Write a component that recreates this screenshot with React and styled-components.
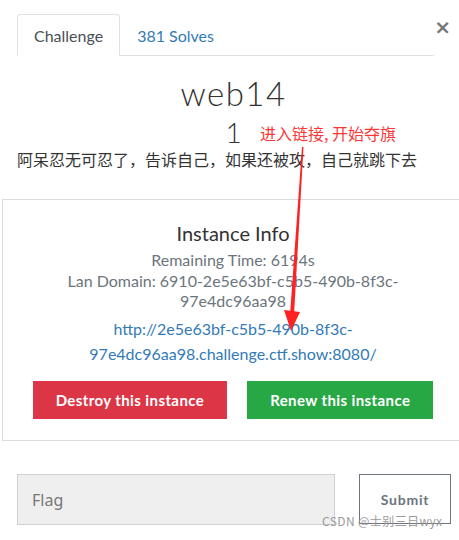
import React from 'react';
import styled, { createGlobalStyle } from 'styled-components';

const GlobalStyle = createGlobalStyle`
    html, body {
        margin: 0;
        padding: 0;
        background: #fff;
        overflow: hidden;
    }
    body {
        font-family: Lato, "Noto Sans", "Noto Sans CJK SC", sans-serif;
        color: #212529;
    }
`;

const Page = styled.div`
    position: relative;
    width: 459px;
    height: 540px;
    overflow: hidden;
`;

const Header = styled.div`
    display: flex;
    align-items: flex-start;
    padding: 14px 0 0 17px;
`;

const TabList = styled.div`
    display: flex;
    width: 419px;
    border-bottom: 1px solid #dee2e6;
`;

const Tab = styled.div`
    height: 42px;
    box-sizing: border-box;
    padding: 0 16px 0 16px;
    display: flex;
    align-items: center;
    font-size: 16px;
    margin-bottom: -1px;
    color: ${(p) => (p.active ? '#495057' : '#337ab7')};
    background: ${(p) => (p.active ? '#fff' : 'transparent')};
    border: 1px solid ${(p) => (p.active ? '#dee2e6' : 'transparent')};
    border-bottom-color: ${(p) => (p.active ? '#fff' : 'transparent')};
    border-radius: 4px 4px 0 0;
`;

const Close = styled.div`
    flex: 1;
    margin-top: 3px;
    padding-right: 8px;
    display: flex;
    justify-content: flex-end;
    color: #777;
    font-family: "DejaVu Sans", sans-serif;
    font-size: 20px;
    font-weight: 700;
    line-height: 20px;
`;

const Body = styled.div`
    display: flex;
    flex-direction: column;
    align-items: center;
    padding: 0 0 0 17px;
    width: 433px;
`;

const Title = styled.h1`
    margin: 17px 0 0;
    font-family: Lato, sans-serif;
    font-weight: 300;
    font-size: 33px;
    letter-spacing: 1.5px;
    line-height: 40px;
    color: #333;
`;

const Points = styled.div`
    font-size: 28px;
    font-weight: 300;
    line-height: 32px;
    margin-top: 3px;
    color: #333;
`;

const Description = styled.p`
    align-self: flex-start;
    margin: -1px 0 0;
    font-family: "Noto Sans CJK SC", sans-serif;
    font-size: 16px;
    line-height: 24px;
    color: #333;
`;

const Card = styled.div`
    margin: 28px 0 0 2px;
    width: 462px;
    box-sizing: border-box;
    border: 1px solid #dcdcdc;
    display: flex;
    flex-direction: column;
    align-items: center;
    padding: 19px 0 21px;
`;

const CardTitle = styled.div`
    font-size: 20px;
    line-height: 28px;
    color: #333;
`;

const Info = styled.div`
    font-size: 16px;
    line-height: 20px;
    color: #6c757d;
    text-align: center;
    width: 350px;
    margin-top: ${(p) => p.gap || 0}px;
`;

const Link = styled.a`
    display: block;
    margin-top: 5px;
    font-size: 16px;
    line-height: 25px;
    color: #337ab7;
    text-decoration: none;
    text-align: center;
    width: 320px;
`;

const Buttons = styled.div`
    display: flex;
    gap: 20px;
    margin-top: 15px;
`;

const ActionButton = styled.button`
    height: 38px;
    border: none;
    padding: 0 23px;
    font-family: Lato, sans-serif;
    font-weight: 700;
    font-size: 15px;
    letter-spacing: 0.4px;
    color: #fff;
    background: ${(p) => p.color};
`;

const FlagRow = styled.div`
    display: flex;
    gap: 24px;
    padding: 33px 0 0 17px;
`;

const FlagInput = styled.input`
    width: 318px;
    height: 51px;
    box-sizing: border-box;
    border: 1px solid #ccd1d6;
    background: #efefef;
    padding: 0 14px;
    font-family: "Noto Sans", sans-serif;
    font-size: 16px;
    color: #333;
    &::placeholder {
        color: #777;
    }
`;

const SubmitButton = styled.button`
    width: 92px;
    height: 50px;
    box-sizing: border-box;
    border: 1px solid #6c757d;
    background: #fff;
    font-family: Lato, sans-serif;
    font-weight: 700;
    font-size: 14px;
    letter-spacing: 0.8px;
    color: #6c757d;
    padding-top: 2px;
`;

const Note = styled.div`
    position: absolute;
    left: 260px;
    top: 121px;
    font-family: "Noto Sans CJK SC", sans-serif;
    font-size: 16px;
    color: #fb3838;
`;

const Arrow = styled.svg`
    position: absolute;
    left: 280px;
    top: 145px;
`;

const Watermark = styled.div`
    position: absolute;
    left: 322px;
    top: 512px;
    font-family: "Noto Sans CJK SC", sans-serif;
    font-size: 12px;
    letter-spacing: 0.4px;
    color: #9a9a9a;
`;

const App = () => (
    <Page>
        <GlobalStyle />
        <Header>
            <TabList>
                <Tab active>Challenge</Tab>
                <Tab>381 Solves</Tab>
            </TabList>
            <Close>×</Close>
        </Header>
        <Body>
            <Title>web14</Title>
            <Points>1</Points>
            <Description>阿呆忍无可忍了，告诉自己，如果还被攻，自己就跳下去</Description>
        </Body>
        <Card>
            <CardTitle>Instance Info</CardTitle>
            <Info gap={3}>Remaining Time: 6194s</Info>
            <Info gap={1}>Lan Domain: 6910-2e5e63bf-c5b5-490b-8f3c-97e4dc96aa98</Info>
            <Link href="#">http://2e5e63bf-c5b5-490b-8f3c-97e4dc96aa98.challenge.ctf.show:8080/</Link>
            <Buttons>
                <ActionButton color="#dc3545">Destroy this instance</ActionButton>
                <ActionButton color="#28a745">Renew this instance</ActionButton>
            </Buttons>
        </Card>
        <FlagRow>
            <FlagInput placeholder="Flag" />
            <SubmitButton>Submit</SubmitButton>
        </FlagRow>
        <Note>进入链接, 开始夺旗</Note>
        <Arrow width="30" height="190" viewBox="0 0 30 190">
            <path d="M22 2 L23.5 2 L14 170 L10 170 Z" fill="#f22" />
            <path d="M4 165 L20 167 L11 186 Z" fill="#f22" />
        </Arrow>
        <Watermark>CSDN @士别三日wyx</Watermark>
    </Page>
);

export default App;
